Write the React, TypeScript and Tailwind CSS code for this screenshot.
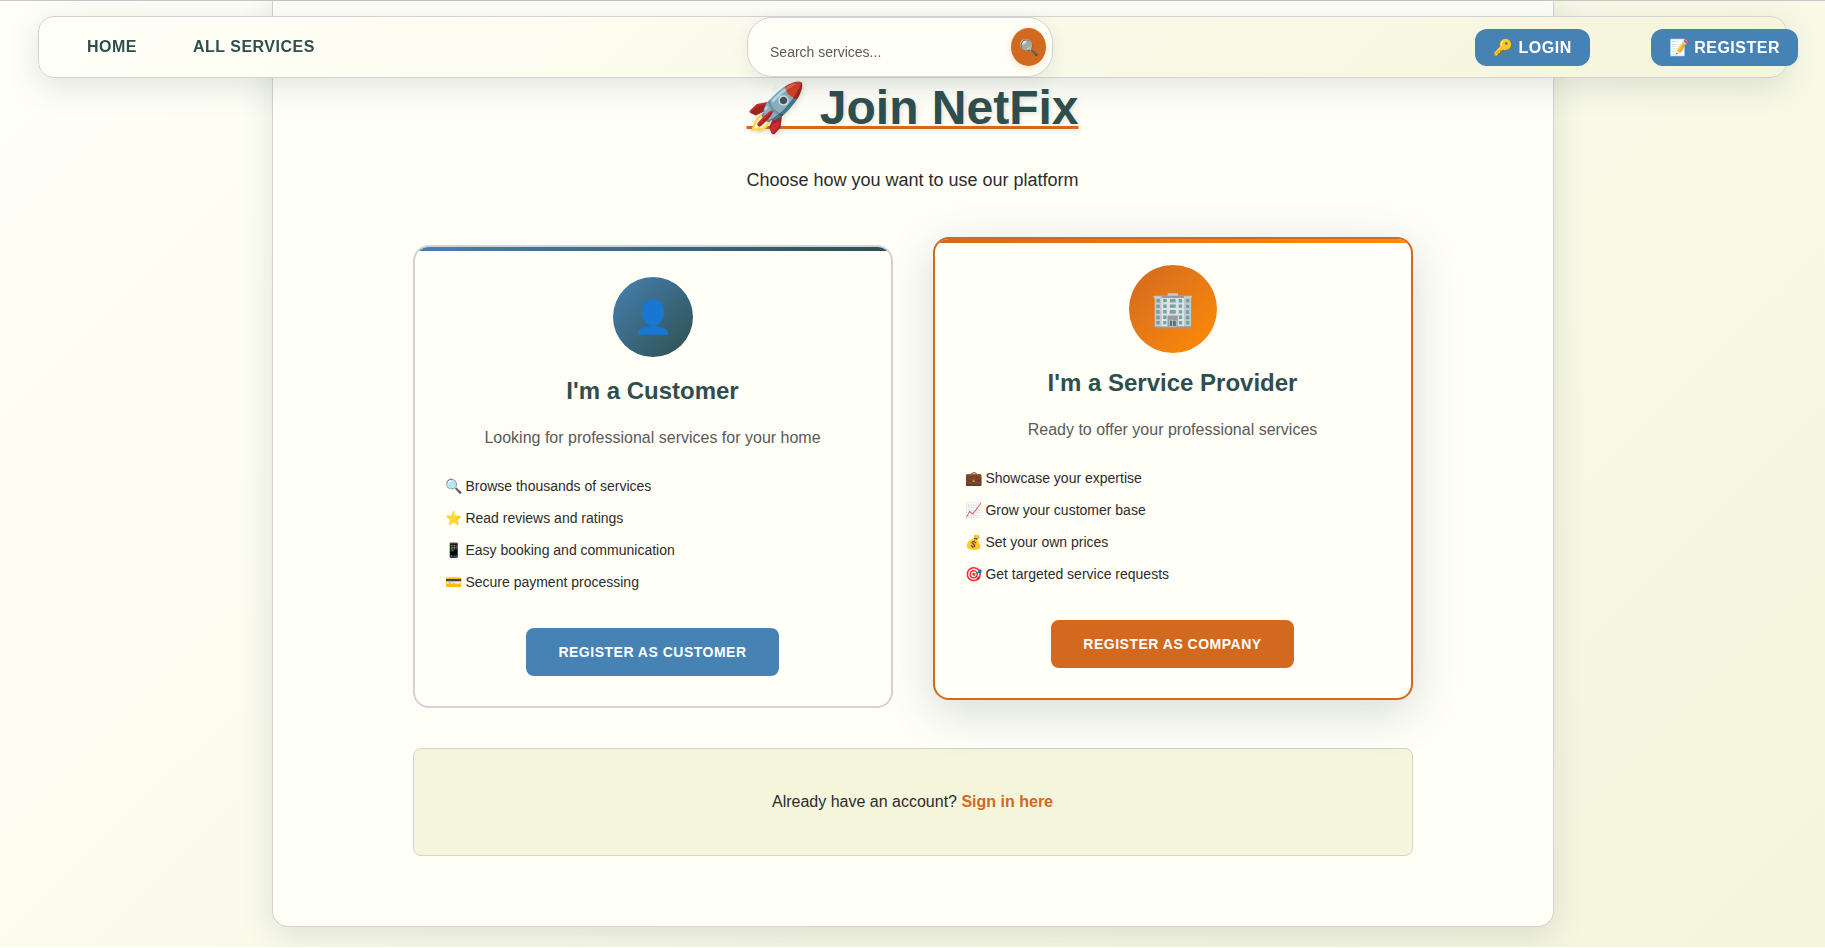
import type { ReactNode } from "react";

type Plan = {
  icon: string;
  title: string;
  description: string;
  features: string[];
  action: string;
  featured?: boolean;
};

const plans: Plan[] = [
  {
    icon: "👤",
    title: "I'm a Customer",
    description: "Looking for professional services for your home",
    features: [
      "🔍 Browse thousands of services",
      "⭐ Read reviews and ratings",
      "📱 Easy booking and communication",
      "💳 Secure payment processing",
    ],
    action: "Register as Customer",
  },
  {
    icon: "🏢",
    title: "I'm a Service Provider",
    description: "Ready to offer your professional services",
    features: [
      "💼 Showcase your expertise",
      "📈 Grow your customer base",
      "💰 Set your own prices",
      "🎯 Get targeted service requests",
    ],
    action: "Register as Company",
    featured: true,
  },
];

function NavButton({ children }: { children: ReactNode }) {
  return (
    <a
      href="#"
      className="flex h-[37px] items-center whitespace-nowrap rounded-xl bg-[#4682b4] px-[18px] pt-px font-bold uppercase tracking-[0.5px] text-white"
    >
      {children}
    </a>
  );
}

function NavBar() {
  return (
    <nav className="fixed inset-x-[38px] top-4 z-10 flex h-[62px] items-center justify-between rounded-2xl border border-[#d3d3d3] bg-linear-135 from-[#fffff8] to-[#f5f5dc] pl-12 shadow-[0_8px_32px_rgba(47,79,79,0.15)]">
      <div className="flex gap-14 pr-2.5 font-bold uppercase tracking-[0.5px] text-[#2f4f4f]">
        <a href="#">Home</a>
        <a href="#">All Services</a>
      </div>
      <form className="flex h-[60px] w-[306px] items-center rounded-[25px] border border-[#d3d3d3] bg-[#fffff8] pl-[22px] pr-[6px] shadow-[0_4px_16px_rgba(47,79,79,0.1)]">
        <input
          type="search"
          aria-label="Search services"
          placeholder="Search services..."
          className="min-w-0 flex-1 bg-transparent pt-2.5 text-sm text-[#2c2c2c] outline-none placeholder:text-[#5a5a5a]"
        />
        <button
          type="button"
          aria-label="Search"
          className="flex h-[38px] w-[35px] items-center justify-center rounded-[50%] bg-[#d2691e] pt-px text-base text-white shadow-[0_2px_8px_rgba(210,105,30,0.2)]"
        >
          🔍
        </button>
      </form>
      <div className="-mr-3 flex gap-[61px]">
        <NavButton>🔑 Login</NavButton>
        <NavButton>📝 Register</NavButton>
      </div>
    </nav>
  );
}

function PlanCard({ plan }: { plan: Plan }) {
  const frame = plan.featured
    ? "-translate-y-2 border-[#d2691e] shadow-[0_12px_48px_rgba(47,79,79,0.2)]"
    : "border-[#d3d3d3]";
  const bar = plan.featured ? "from-[#d2691e] to-[#ff8c00]" : "from-[#4682b4] to-[#2f4f4f]";
  const button = plan.featured ? "bg-[#d2691e]" : "bg-[#4682b4]";
  return (
    <section className={`overflow-hidden rounded-2xl border-2 bg-[#fffff8] ${frame}`}>
      <div className={`h-1 bg-linear-to-r ${bar}`} />
      <div className="flex flex-col items-center px-[30px] pb-[30px] pt-[26px]">
        <div
          className={`flex size-20 items-center justify-center rounded-full bg-linear-135 text-[32px] ${bar} ${plan.featured ? "scale-110" : ""}`}
        >
          {plan.icon}
        </div>
        <h2 className="mt-[18px] text-2xl font-bold leading-8 text-[#2f4f4f]">{plan.title}</h2>
        <p className="mt-[19px] leading-6 text-[#5a5a5a]">{plan.description}</p>
        <ul className="mt-5 self-stretch text-sm leading-8 text-[#2c2c2c]">
          {plan.features.map((feature) => (
            <li key={feature} className="h-8">
              {feature}
            </li>
          ))}
        </ul>
        <a
          href="#"
          className={`mt-[30px] flex h-12 items-center rounded-lg px-8 text-sm font-bold uppercase tracking-[0.5px] text-white ${button}`}
        >
          {plan.action}
        </a>
      </div>
    </section>
  );
}

export default function App() {
  return (
    <div className="border-t border-[#c8c8c8] bg-linear-135 from-[#fffff8] to-[#f5f5dc] pb-5 font-['Liberation_Sans',Arial,sans-serif] text-base text-[#2c2c2c]">
      <NavBar />
      <main className="mx-auto max-w-[1282px] rounded-b-2xl border border-t-0 border-[#d3d3d3] bg-[#fffff8] px-10 pb-[70px] pt-[77px] shadow-[0_8px_32px_rgba(47,79,79,0.15)]">
        <div className="mx-auto max-w-[1000px]">
          <header className="text-center">
            <h1 className="text-5xl font-bold leading-[60px] text-[#2f4f4f] underline decoration-[#d2691e] decoration-3 text-shadow-[2px_2px_4px_rgba(0,0,0,0.1)]">
              🚀 Join NetFix
            </h1>
            <p className="mt-7 text-lg leading-7">Choose how you want to use our platform</p>
          </header>
          <div className="mt-[51px] grid grid-cols-2 gap-10">
            {plans.map((plan) => (
              <PlanCard key={plan.title} plan={plan} />
            ))}
          </div>
          <p className="mt-10 rounded-lg border border-[#d3d3d3] bg-[#f5f5dc] px-8 py-[41px] text-center leading-6">
            Already have an account?{" "}
            <a href="#" className="font-bold text-[#d2691e]">
              Sign in here
            </a>
          </p>
        </div>
      </main>
    </div>
  );
}
